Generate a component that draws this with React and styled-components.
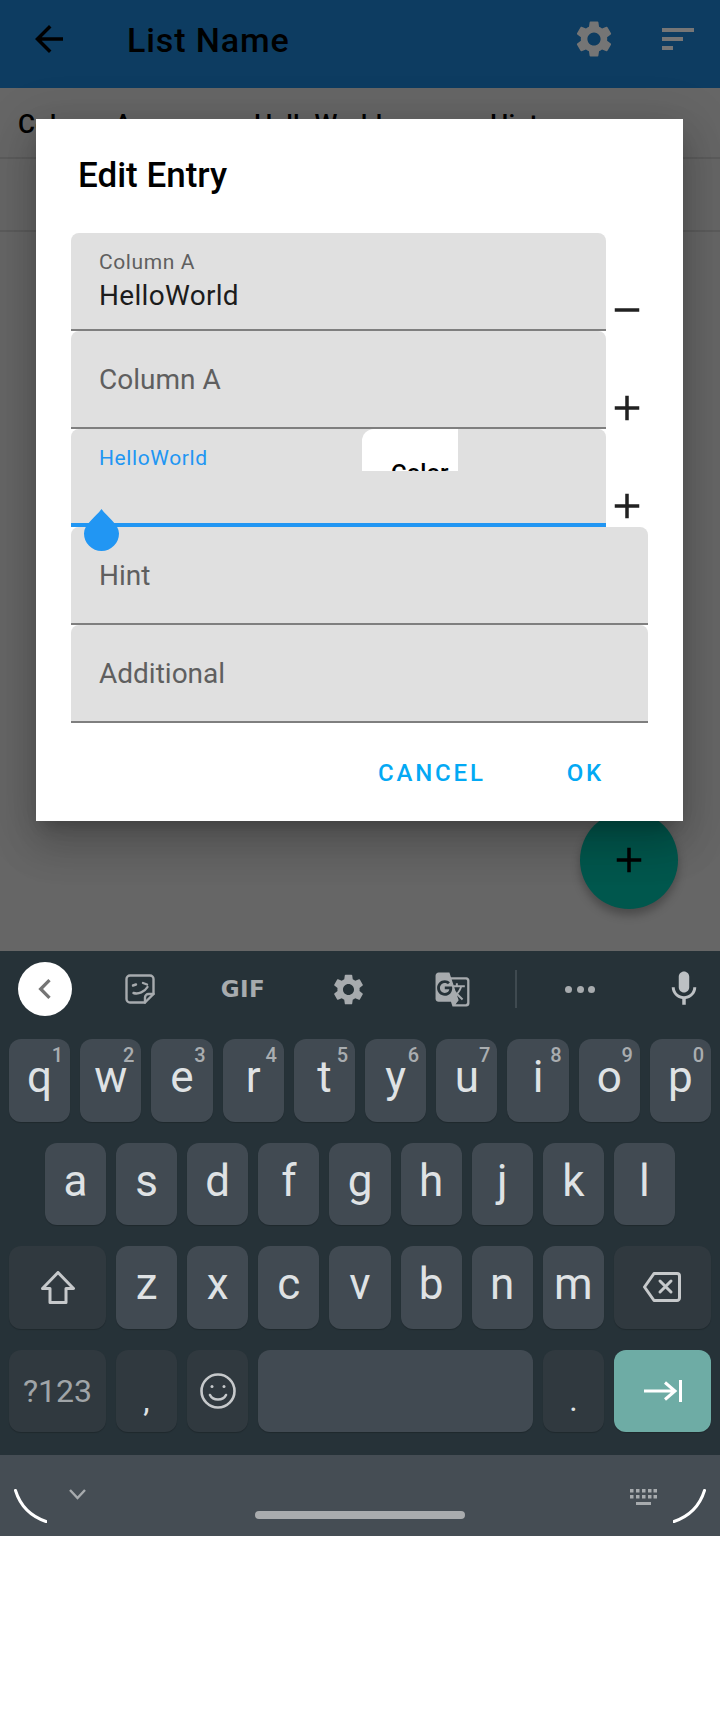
import React from 'react';
import styled, { createGlobalStyle } from 'styled-components';
import { MdArrowBack, MdSettings, MdAdd, MdRemove, MdKeyboardArrowLeft, MdMic, MdGTranslate } from 'react-icons/md';

const GlobalStyle = createGlobalStyle`
  html, body {
    margin: 0;
    padding: 0;
    background: #fff;
  }
  * {
    box-sizing: border-box;
  }
  body {
    font-family: Roboto, "Liberation Sans", sans-serif;
  }
`;

const Page = styled.div`
  width: 720px;
  height: 1712px;
  background: #fff;
  overflow: hidden;
`;

const Screen = styled.div`
  position: relative;
  height: 951px;
  background: #666;
  overflow: hidden;
`;

const AppBar = styled.header`
  height: 88px;
  background: #0d3c61;
  display: flex;
  align-items: center;
  padding: 0 26px 10px 28px;
  color: #000;
`;

const AppTitle = styled.h1`
  flex: 1;
  margin: 2px 0 0 57px;
  font-size: 34px;
  font-weight: 500;
  letter-spacing: 0.9px;
`;

const GearIcon = styled(MdSettings)`
  color: #757575;
  margin-right: 46px;
`;

const SortIcon = styled.svg`
  width: 32px;
  height: 22px;
  fill: #767676;
`;

const TableRow = styled.div`
  height: ${(p) => p.$h}px;
  display: grid;
  grid-template-columns: repeat(3, 236px);
  align-items: center;
  padding: 3px 0 0 18px;
  border-bottom: 2px solid #5c5c5c;
  font-size: 26px;
  font-weight: 500;
  color: #000;
`;

const Fab = styled.div`
  position: absolute;
  left: 580px;
  top: 811px;
  width: 98px;
  height: 98px;
  border-radius: 50%;
  background: #00574d;
  color: #000;
  display: flex;
  align-items: center;
  justify-content: center;
  box-shadow: 0 6px 10px rgba(0, 0, 0, 0.28);
`;

const Dialog = styled.section`
  position: absolute;
  left: 36px;
  top: 119px;
  width: 647px;
  height: 702px;
  background: #fff;
  padding: 36px 35px 0;
  box-shadow: 0 24px 38px 3px rgba(0, 0, 0, 0.14), 0 9px 46px 8px rgba(0, 0, 0, 0.12), 0 11px 15px -7px rgba(0, 0, 0, 0.2);
`;

const DialogTitle = styled.h2`
  margin: 0 0 37px 7px;
  font-size: 35px;
  line-height: 41px;
  font-weight: 500;
  color: #000;
`;

const FieldRow = styled.div`
  display: flex;
`;

const Field = styled.div`
  position: relative;
  flex: 1;
  height: 98px;
  background: #e0e0e0;
  border-radius: 8px 8px 0 0;
  border-bottom: ${(p) => (p.$focused ? '4px solid #2196f3' : '2px solid #7f7f7f')};
  padding: 0 28px;
  display: flex;
  flex-direction: column;
  justify-content: ${(p) => (p.$float ? 'flex-start' : 'center')};
  padding-top: ${(p) => (p.$float ? '17px' : '2px')};
`;

const FloatLabel = styled.div`
  font-size: 21px;
  line-height: 24px;
  letter-spacing: 0.6px;
  color: ${(p) => (p.$focused ? '#2196f3' : '#5f5f5f')};
`;

const FieldValue = styled.div`
  margin-top: 5px;
  font-size: 28px;
  line-height: 34px;
  letter-spacing: 0.3px;
  color: #1c1c1c;
`;

const Placeholder = styled.div`
  font-size: 28px;
  line-height: 34px;
  color: #5f5f5f;
`;

const RowIcon = styled.div`
  flex: 0 0 42px;
  height: 42px;
  align-self: flex-end;
  color: #212121;
  display: flex;
`;

const ColorPopup = styled.div`
  position: absolute;
  left: 291px;
  top: 0;
  width: 96px;
  height: 42px;
  background: #fff;
  border-radius: 12px 0 0 0;
  overflow: hidden;
  padding: 30px 0 0 29px;
  font-size: 24px;
  line-height: 28px;
  font-weight: 500;
  color: #000;
`;

const Thumb = styled.svg`
  position: absolute;
  left: 13px;
  top: 80px;
  width: 35px;
  height: 42px;
  fill: #2196f3;
  z-index: 2;
`;

const DialogActions = styled.div`
  height: 100px;
  display: flex;
  align-items: center;
  justify-content: flex-end;
  gap: 81px;
  padding-right: 44px;
`;

const ActionButton = styled.button`
  border: 0;
  padding: 0;
  background: none;
  font-family: inherit;
  font-size: 24px;
  font-weight: 500;
  letter-spacing: 2.8px;
  color: #03a9f4;
`;

const Keyboard = styled.div`
  height: 585px;
  background: #263238;
  display: flex;
  flex-direction: column;
`;

const Toolbar = styled.div`
  height: 88px;
  display: flex;
  align-items: center;
  padding: 0 0 12px 18px;
  color: #a7abae;
`;

const BackCircle = styled.div`
  flex: 0 0 54px;
  height: 54px;
  border-radius: 50%;
  background: #fff;
  color: #757575;
  display: flex;
  align-items: center;
  justify-content: center;
`;

const ToolSlot = styled.div`
  flex: 0 0 ${(p) => p.$w}px;
  display: flex;
  align-items: center;
  justify-content: center;
`;

const MicSlot = styled(ToolSlot)`
  margin-left: auto;
  color: #bdc1c4;
`;

const GifText = styled.span`
  font-family: "DejaVu Sans", sans-serif;
  font-size: 23px;
  line-height: 24px;
  font-weight: 700;
  letter-spacing: 0.5px;
`;

const ToolDivider = styled.div`
  width: 2px;
  height: 38px;
  background: #3f4a50;
`;

const Dots = styled.div`
  display: flex;
  gap: 4.5px;
`;

const Dot = styled.span`
  width: 7px;
  height: 7px;
  border-radius: 50%;
  background: #a7abae;
`;

const KeyRows = styled.div`
  display: flex;
  flex-direction: column;
  gap: 21px;
`;

const KeyRow = styled.div`
  height: 82.5px;
  display: flex;
  gap: 10px;
  padding: 0 ${(p) => p.$inset || 9}px;
`;

const Key = styled.div`
  position: relative;
  flex: ${(p) => (p.$w ? `0 0 ${p.$w}px` : '1')};
  border-radius: 12px;
  background: ${(p) => (p.$accent ? '#6eaca5' : p.$special ? '#30393f' : '#414a52')};
  box-shadow: 0 1px 1px rgba(0, 0, 0, 0.2);
  display: flex;
  align-items: center;
  justify-content: center;
  padding-bottom: ${(p) => p.$lift || 0}px;
  padding-top: ${(p) => p.$drop || 0}px;
  color: ${(p) => (p.$dim ? '#a0a5a8' : '#dfe2e4')};
  font-size: ${(p) => p.$size || 44}px;
  line-height: 1;
`;

const Hint = styled.span`
  position: absolute;
  top: 6px;
  right: 7px;
  font-size: 20px;
  line-height: 20px;
  font-weight: 500;
  color: #a9adb0;
`;

const NavBar = styled.div`
  margin-top: 23px;
  flex: 1;
  background: #454d54;
  display: grid;
  grid-template-columns: 1fr auto 1fr;
`;

const NavSide = styled.div`
  display: flex;
  align-items: flex-start;
  justify-content: ${(p) => (p.$end ? 'flex-end' : 'flex-start')};
  gap: ${(p) => p.$gap}px;
  padding: 34px ${(p) => (p.$end ? 14 : 0)}px 0 ${(p) => (p.$end ? 0 : 14)}px;
`;

const HomePill = styled.div`
  width: 210px;
  height: 8px;
  margin-top: 56px;
  border-radius: 4px;
  background: #a9acae;
`;

const row1 = [['q', 1], ['w', 2], ['e', 3], ['r', 4], ['t', 5], ['y', 6], ['u', 7], ['i', 8], ['o', 9], ['p', 0]];
const row2 = ['a', 's', 'd', 'f', 'g', 'h', 'j', 'k', 'l'];
const row3 = ['z', 'x', 'c', 'v', 'b', 'n', 'm'];

function App() {
  return (
    <Page>
      <GlobalStyle />
      <Screen>
        <AppBar>
          <MdArrowBack size={42} />
          <AppTitle>List Name</AppTitle>
          <GearIcon size={44} />
          <SortIcon viewBox='0 0 32 22'>
            <rect width='32' height='4' />
            <rect y='9' width='21' height='4' />
            <rect y='18' width='11' height='4' />
          </SortIcon>
        </AppBar>
        <TableRow $h={71}>
          <span>Column A</span>
          <span>HelloWorld</span>
          <span>Hint</span>
        </TableRow>
        <TableRow $h={73} />
        <Fab>
          <MdAdd size={42} />
        </Fab>
        <Dialog>
          <DialogTitle>Edit Entry</DialogTitle>
          <FieldRow>
            <Field $float>
              <FloatLabel>Column A</FloatLabel>
              <FieldValue>HelloWorld</FieldValue>
            </Field>
            <RowIcon>
              <MdRemove size={42} />
            </RowIcon>
          </FieldRow>
          <FieldRow>
            <Field>
              <Placeholder>Column A</Placeholder>
            </Field>
            <RowIcon>
              <MdAdd size={42} />
            </RowIcon>
          </FieldRow>
          <FieldRow>
            <Field $float $focused>
              <FloatLabel $focused>HelloWorld</FloatLabel>
              <ColorPopup>Color</ColorPopup>
              <Thumb viewBox='0 0 35 42'>
                <path d='M17.5 0C23 8 35 15 35 24.5A17.5 17.5 0 0 1 0 24.5C0 15 12 8 17.5 0Z' />
              </Thumb>
            </Field>
            <RowIcon>
              <MdAdd size={42} />
            </RowIcon>
          </FieldRow>
          <Field>
            <Placeholder>Hint</Placeholder>
          </Field>
          <Field>
            <Placeholder>Additional</Placeholder>
          </Field>
          <DialogActions>
            <ActionButton>CANCEL</ActionButton>
            <ActionButton>OK</ActionButton>
          </DialogActions>
        </Dialog>
      </Screen>
      <Keyboard>
        <Toolbar>
          <BackCircle>
            <MdKeyboardArrowLeft size={40} />
          </BackCircle>
          <ToolSlot $w={136}>
            <svg width='30' height='30' viewBox='0 0 30 30' fill='none' stroke='currentColor' strokeWidth='2.4' strokeLinecap='round' strokeLinejoin='round'>
              <path d='M5 1.5h20a3.5 3.5 0 0 1 3.5 3.5v15L20 28.5H5A3.5 3.5 0 0 1 1.5 25V5A3.5 3.5 0 0 1 5 1.5z' />
              <path d='M28.5 20h-5a3.5 3.5 0 0 0-3.5 3.5v5' />
              <path d='M8 11.5l3-1M18 9l4 1.5M8.5 19c5 1.5 11-1 14-6' />
            </svg>
          </ToolSlot>
          <ToolSlot $w={70}>
            <GifText>GIF</GifText>
          </ToolSlot>
          <ToolSlot $w={140}>
            <MdSettings size={37} />
          </ToolSlot>
          <ToolSlot $w={68}>
            <MdGTranslate size={37} />
          </ToolSlot>
          <ToolSlot $w={60}>
            <ToolDivider />
          </ToolSlot>
          <ToolSlot $w={68}>
            <Dots>
              <Dot />
              <Dot />
              <Dot />
            </Dots>
          </ToolSlot>
          <MicSlot $w={72}>
            <MdMic size={42} />
          </MicSlot>
        </Toolbar>
        <KeyRows>
          <KeyRow>
            {row1.map(([letter, hint]) => (
              <Key key={letter} $lift={6}>
                {letter}
                <Hint>{hint}</Hint>
              </Key>
            ))}
          </KeyRow>
          <KeyRow $inset={45}>
            {row2.map((letter) => (
              <Key key={letter} $lift={6}>
                {letter}
              </Key>
            ))}
          </KeyRow>
          <KeyRow>
            <Key $w={97} $special>
              <svg width='34' height='33' viewBox='0 0 34 33' fill='none' stroke='#c6c9cb' strokeWidth='3' strokeLinejoin='round'>
                <path d='M17 1.5L32.5 17.5H25V31.5H9V17.5H1.5z' />
              </svg>
            </Key>
            {row3.map((letter) => (
              <Key key={letter} $lift={6}>
                {letter}
              </Key>
            ))}
            <Key $w={97} $special>
              <svg width='38' height='30' viewBox='0 0 38 30' fill='none' stroke='#c6c9cb' strokeWidth='3' strokeLinejoin='round' strokeLinecap='round'>
                <path d='M11 1.5H34a2.5 2.5 0 0 1 2.5 2.5V26a2.5 2.5 0 0 1-2.5 2.5H11L1.5 15z' />
                <path d='M17 9l11 11M28 9L17 20' />
              </svg>
            </Key>
          </KeyRow>
          <KeyRow>
            <Key $w={97} $special $dim $size={32}>
              ?123
            </Key>
            <Key $w={61} $special $size={32} $drop={18}>
              ,
            </Key>
            <Key $w={61} $special>
              <svg width='36' height='36' viewBox='0 0 36 36' fill='none' stroke='#c6c9cb' strokeWidth='2.6' strokeLinecap='round'>
                <circle cx='18' cy='18' r='16.5' />
                <path d='M10 22c3 6 13 6 16 0' />
                <circle cx='12' cy='13.5' r='1.5' fill='#c6c9cb' stroke='none' />
                <circle cx='24' cy='13.5' r='1.5' fill='#c6c9cb' stroke='none' />
              </svg>
            </Key>
            <Key />
            <Key $w={61} $special $size={32} $drop={18}>
              .
            </Key>
            <Key $w={97} $accent>
              <svg width='38' height='22' viewBox='0 0 38 22' fill='none' stroke='#fff' strokeWidth='3'>
                <path d='M0 11H31M21 2.5L31 11L21 19.5' />
                <path d='M36.5 0V22' />
              </svg>
            </Key>
          </KeyRow>
        </KeyRows>
        <NavBar>
          <NavSide $gap={22}>
            <svg width='33' height='34' viewBox='0 0 33 34' fill='none' stroke='#fff' strokeWidth='3' strokeLinecap='round'>
              <path d='M1.5 1.5C6 16 16 27 32 32.5' />
            </svg>
            <svg width='17' height='11' viewBox='0 0 17 11' fill='none' stroke='#a7abae' strokeWidth='2.4'>
              <path d='M1 1L8.5 9L16 1' />
            </svg>
          </NavSide>
          <HomePill />
          <NavSide $end $gap={16}>
            <svg width='27' height='16' viewBox='0 0 27 16' fill='#a7abae'>
              <rect x='0' width='3.5' height='3.5' />
              <rect x='6' width='3.5' height='3.5' />
              <rect x='12' width='3.5' height='3.5' />
              <rect x='18' width='3.5' height='3.5' />
              <rect x='23.5' width='3.5' height='3.5' />
              <rect x='0' y='6' width='3.5' height='3.5' />
              <rect x='6' y='6' width='3.5' height='3.5' />
              <rect x='12' y='6' width='3.5' height='3.5' />
              <rect x='18' y='6' width='3.5' height='3.5' />
              <rect x='23.5' y='6' width='3.5' height='3.5' />
              <rect x='6' y='13' width='15' height='3' />
            </svg>
            <svg width='33' height='34' viewBox='0 0 33 34' fill='none' stroke='#fff' strokeWidth='3' strokeLinecap='round'>
              <path d='M31.5 1.5C27 16 17 27 1 32.5' />
            </svg>
          </NavSide>
        </NavBar>
      </Keyboard>
    </Page>
  );
}

export default App;
